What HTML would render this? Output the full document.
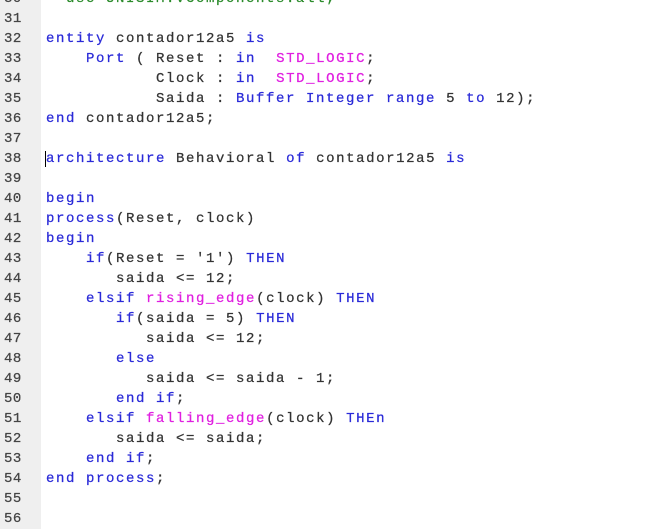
<!DOCTYPE html>
<html><head><meta charset="utf-8"><style>
html,body{margin:0;padding:0;background:#fff;width:665px;height:529px;overflow:hidden}
.g{position:absolute;left:0;top:0;width:41px;height:529px;background:#efefef}
.c{position:absolute;left:0;top:-11px;width:665px;font-family:"Liberation Mono",monospace;font-size:14px;letter-spacing:1.6px;line-height:20px;color:#333;-webkit-text-stroke:0.25px}
.l{height:20px;position:relative}
.n{position:absolute;left:4px;width:36px;color:#444;letter-spacing:0.5px}
.t{position:absolute;left:46px;white-space:pre}
.k{color:#2a2ad8}
.m{color:#e020e0}
.cm{color:#2a8a2a}
.cur{position:absolute;left:45px;top:2px;width:1px;height:16px;background:#000}
</style></head><body>
<div class="g"></div>
<div class="c">
<div class="l"><span class="n">30</span><span class="t cm">--use UNISIM.VComponents.all;</span></div>
<div class="l"><span class="n">31</span></div>
<div class="l"><span class="n">32</span><span class="t"><span class="k">entity</span> contador12a5 <span class="k">is</span></span></div>
<div class="l"><span class="n">33</span><span class="t">    <span class="k">Port</span> ( Reset : <span class="k">in</span>  <span class="m">STD_LOGIC</span>;</span></div>
<div class="l"><span class="n">34</span><span class="t">           Clock : <span class="k">in</span>  <span class="m">STD_LOGIC</span>;</span></div>
<div class="l"><span class="n">35</span><span class="t">           Saida : <span class="k">Buffer Integer range</span> 5 <span class="k">to</span> 12);</span></div>
<div class="l"><span class="n">36</span><span class="t"><span class="k">end</span> contador12a5;</span></div>
<div class="l"><span class="n">37</span></div>
<div class="l"><span class="n">38</span><span class="cur"></span><span class="t"><span class="k">architecture</span> Behavioral <span class="k">of</span> contador12a5 <span class="k">is</span></span></div>
<div class="l"><span class="n">39</span></div>
<div class="l"><span class="n">40</span><span class="t"><span class="k">begin</span></span></div>
<div class="l"><span class="n">41</span><span class="t"><span class="k">process</span>(Reset, clock)</span></div>
<div class="l"><span class="n">42</span><span class="t"><span class="k">begin</span></span></div>
<div class="l"><span class="n">43</span><span class="t">    <span class="k">if</span>(Reset = '1') <span class="k">THEN</span></span></div>
<div class="l"><span class="n">44</span><span class="t">       saida &lt;= 12;</span></div>
<div class="l"><span class="n">45</span><span class="t">    <span class="k">elsif</span> <span class="m">rising_edge</span>(clock) <span class="k">THEN</span></span></div>
<div class="l"><span class="n">46</span><span class="t">       <span class="k">if</span>(saida = 5) <span class="k">THEN</span></span></div>
<div class="l"><span class="n">47</span><span class="t">          saida &lt;= 12;</span></div>
<div class="l"><span class="n">48</span><span class="t">       <span class="k">else</span></span></div>
<div class="l"><span class="n">49</span><span class="t">          saida &lt;= saida - 1;</span></div>
<div class="l"><span class="n">50</span><span class="t">       <span class="k">end if</span>;</span></div>
<div class="l"><span class="n">51</span><span class="t">    <span class="k">elsif</span> <span class="m">falling_edge</span>(clock) <span class="k">THEn</span></span></div>
<div class="l"><span class="n">52</span><span class="t">       saida &lt;= saida;</span></div>
<div class="l"><span class="n">53</span><span class="t">    <span class="k">end if</span>;</span></div>
<div class="l"><span class="n">54</span><span class="t"><span class="k">end process</span>;</span></div>
<div class="l"><span class="n">55</span></div>
<div class="l"><span class="n">56</span></div>
</div>
</body></html>
